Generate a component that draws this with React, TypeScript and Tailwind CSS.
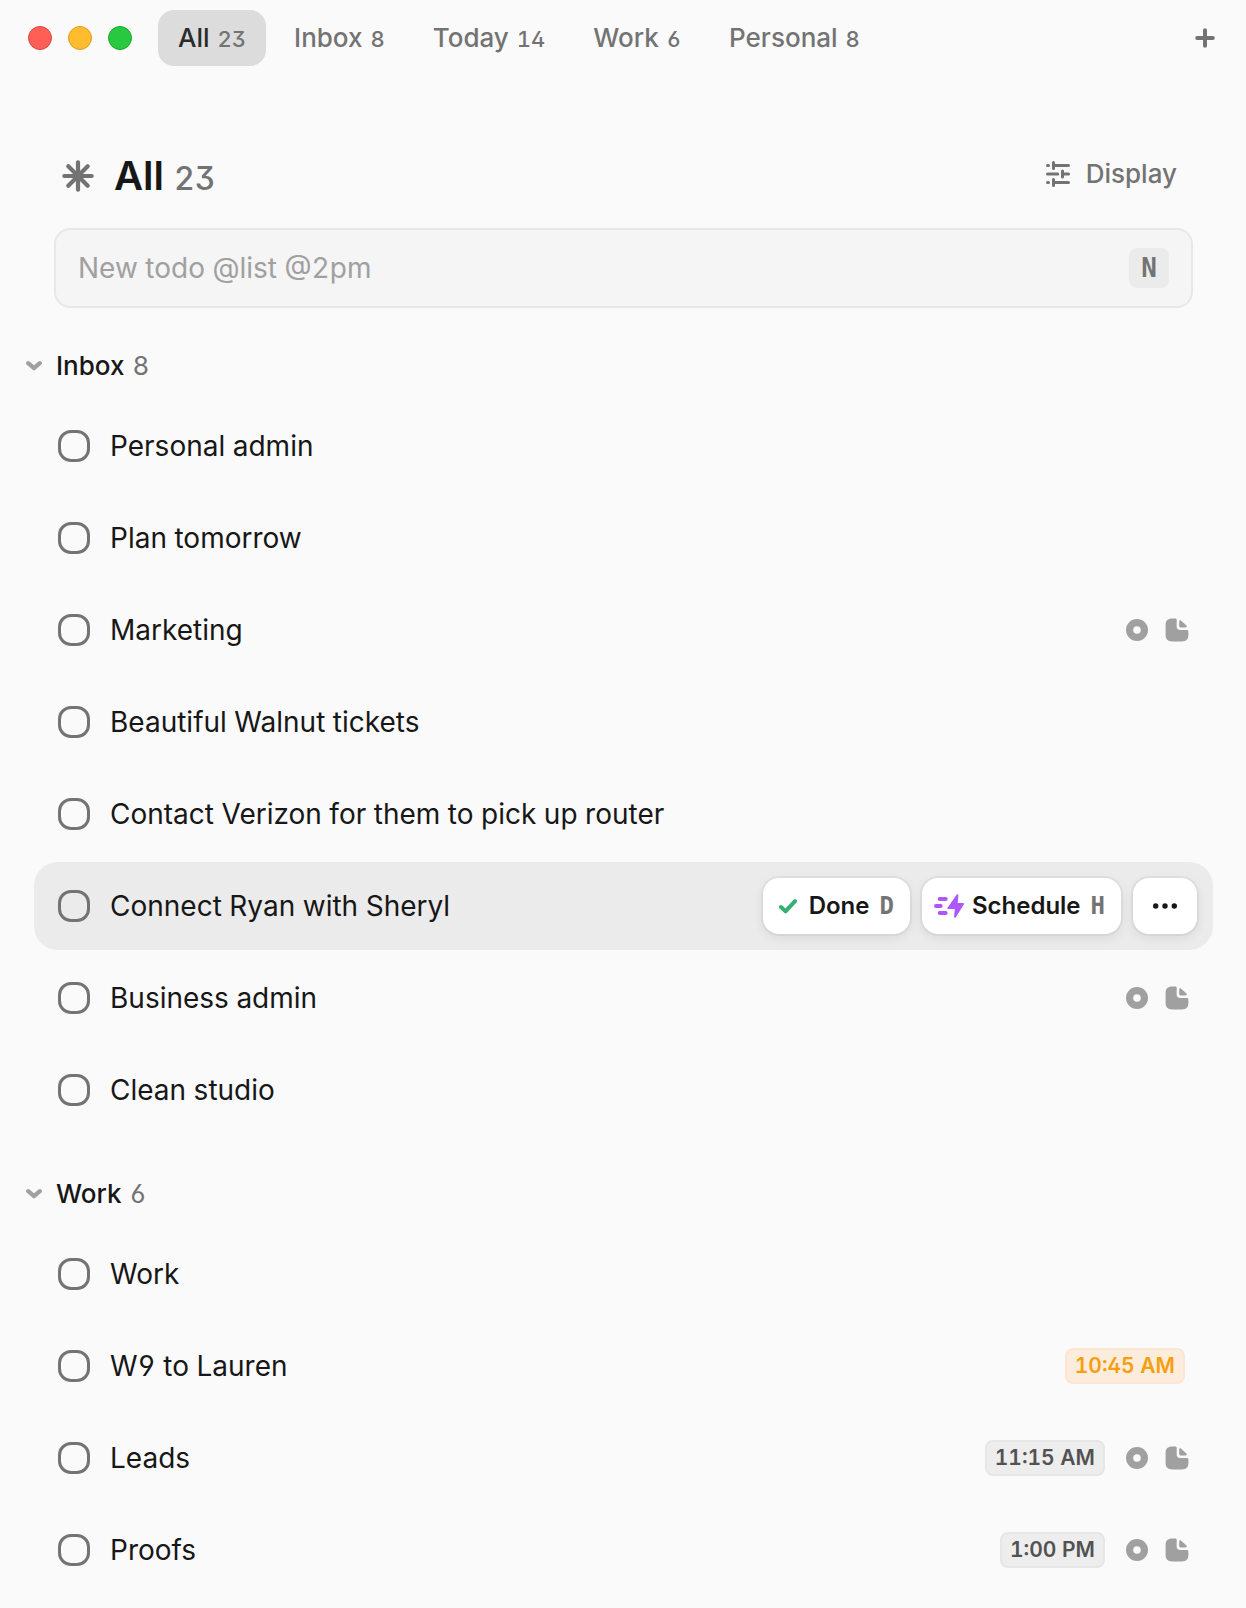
import React from 'react';

type TodoItem = {
  title: string;
  time?: string;
  due?: boolean;
  meta?: boolean;
  active?: boolean;
};

type Section = { name: string; count: number; items: TodoItem[] };

const TABS = [
  { name: 'All', count: 23, active: true },
  { name: 'Inbox', count: 8 },
  { name: 'Today', count: 14 },
  { name: 'Work', count: 6 },
  { name: 'Personal', count: 8 },
];

const SECTIONS: Section[] = [
  {
    name: 'Inbox',
    count: 8,
    items: [
      { title: 'Personal admin' },
      { title: 'Plan tomorrow' },
      { title: 'Marketing', meta: true },
      { title: 'Beautiful Walnut tickets' },
      { title: 'Contact Verizon for them to pick up router' },
      { title: 'Connect Ryan with Sheryl', active: true },
      { title: 'Business admin', meta: true },
      { title: 'Clean studio' },
    ],
  },
  {
    name: 'Work',
    count: 6,
    items: [
      { title: 'Work' },
      { title: 'W9 to Lauren', time: '10:45 AM', due: true },
      { title: 'Leads', time: '11:15 AM', meta: true },
      { title: 'Proofs', time: '1:00 PM', meta: true },
    ],
  },
];

const PlusIcon = () => (
  <svg className="w-5 h-5" viewBox="0 0 20 20" fill="none" stroke="currentColor" strokeWidth="4" strokeLinecap="round">
    <path d="M10 2.2v15.6M2.2 10h15.6" />
  </svg>
);

const AsteriskIcon = () => (
  <svg className="w-8 h-8 text-[#737373]" viewBox="0 0 32 32" fill="none" stroke="currentColor" strokeWidth="4.2" strokeLinecap="round">
    <path d="M16 2.3v27.4M2.3 16h27.4M6.3 6.3l19.4 19.4M25.7 6.3L6.3 25.7" />
  </svg>
);

const SlidersIcon = () => (
  <svg className="w-6 h-[26px]" viewBox="0 0 24 26" fill="none" stroke="currentColor" strokeWidth="3" strokeLinecap="round">
    <path d="M1.5 4.4h1M7.5 4.4h15M7.5 1.5v6M1.5 13h10.3M16.5 13h6M16.5 10v6M1.5 21.6h1M7.5 21.6h15M7.5 18.5v6" />
  </svg>
);

const ChevronIcon = () => (
  <svg className="w-4 h-4 text-[#a0a0a0]" viewBox="0 0 16 16" fill="none" stroke="currentColor" strokeWidth="4.2" strokeLinecap="round" strokeLinejoin="round">
    <path d="M2.2 5.2L8 10.2l5.800-5" />
  </svg>
);

const CheckIcon = () => (
  <svg className="w-[18px] h-4 text-[#33b073]" viewBox="0 0 18 16" fill="none" stroke="currentColor" strokeWidth="4" strokeLinecap="round" strokeLinejoin="round">
    <path d="M2 9l4.6 4.4L16 3.2" />
  </svg>
);

const BoltIcon = () => (
  <svg className="w-[30px] h-6 text-[#ad57ff]" viewBox="0 0 30 24" fill="currentColor">
    <path d="M22.6 .7c.7-.9 1.9-.5 1.8 .6l-.7 7.6h5.3c1 0 1.4 .9 .8 1.7L21.9 23.3c-.7 .9-1.9 .5-1.8-.6l.7-7.6h-6.3c-1 0-1.4-.9-.8-1.7z" />
    <path d="M5.7 5h6M2 12h4.7M5.7 19h6" stroke="currentColor" strokeWidth="4" strokeLinecap="round" fill="none" />
  </svg>
);

const DotsIcon = () => (
  <svg className="w-6 h-6" viewBox="0 0 24 24" fill="currentColor">
    <circle cx="2.7" cy="12" r="2.7" />
    <circle cx="12" cy="12" r="2.7" />
    <circle cx="21.3" cy="12" r="2.7" />
  </svg>
);

const RingIcon = () => (
  <svg className="w-6 h-6" viewBox="0 0 24 24" fill="none" stroke="currentColor" strokeWidth="7.2">
    <circle cx="12" cy="12" r="7.4" />
  </svg>
);

const NoteIcon = () => (
  <svg className="w-6 h-6" viewBox="0 0 24 24" fill="currentColor">
    <path d="M7 .6h3.2c1 0 1.5 .5 1.5 1.5v6.4c0 2.3 1.2 3.5 3.5 3.5h6.6c1.1 0 1.6 .6 1.6 1.6v3.6c0 4-2.3 6.2-6.2 6.2H7C3 23.4 .6 21.2 .6 17.2V6.8C.6 2.8 3 .6 7 .6z" />
    <path d="M14.2 3.2c0-.9 1-1.4 1.7-.8l5.5 5.1c.7 .7 .3 1.9-.7 1.9h-5.1c-.9 0-1.4-.5-1.4-1.4z" />
  </svg>
);

const ACTION =
  'h-14 rounded-2xl bg-white flex items-center font-semibold text-2xl text-[#171717] shadow-[0_0_0_2px_rgba(0,0,0,0.04),0_4px_12px_rgba(0,0,0,0.08)]';
const KEY = 'font-["DejaVu_Sans_Mono",monospace] font-bold text-[#737373]';

const RowActions = () => (
  <div className="flex gap-3">
    <button className={`${ACTION} px-4`}>
      <CheckIcon />
      <span className="ml-3 mr-2.5">Done</span>
      <kbd className={`${KEY} text-2xl`}>D</kbd>
    </button>
    <button className={`${ACTION} pl-3 pr-4`}>
      <BoltIcon />
      <span className="ml-2 mr-2.5">Schedule</span>
      <kbd className={`${KEY} text-2xl`}>H</kbd>
    </button>
    <button className={`${ACTION} px-5`} aria-label="More">
      <DotsIcon />
    </button>
  </div>
);

const TimeBadge: React.FC<{ time: string; due?: boolean }> = ({ time, due }) => (
  <span
    className={`h-9 px-2 mr-1 rounded-lg border-2 flex items-center text-[21px] font-semibold ${
      due ? 'bg-[#fbecdc] border-[#fbe6d3] text-[#f79e0f]' : 'bg-[#ededed] border-[#e6e6e6] text-[#525252]'
    }`}
  >
    {time}
  </span>
);

const TodoRow: React.FC<{ item: TodoItem }> = ({ item }) => (
  <li className={`h-[88px] pl-6 flex items-center justify-between rounded-3xl ${item.active ? 'bg-[#ebebeb] pr-4' : 'pr-6'}`}>
    <label className="flex items-center gap-5 text-[28px] leading-9 text-[#171717]">
      <input type="checkbox" className="appearance-none w-8 h-8 rounded-[13px] border-3 border-[#737373] shrink-0" />
      {item.title}
    </label>
    {item.active ? (
      <RowActions />
    ) : (
      <div className="flex items-center gap-4 text-[#a0a0a0]">
        {item.time && <TimeBadge time={item.time} due={item.due} />}
        {item.meta && <RingIcon />}
        {item.meta && <NoteIcon />}
      </div>
    )}
  </li>
);

export default function App() {
  return (
    <div className='min-h-screen bg-[#fafafa] font-["Inter",sans-serif] tabular-nums [font-feature-settings:"ss01","cv09"]'>
      <header className="h-[76px] pl-7 pr-[31px] flex items-center justify-between text-[#737373]">
        <div className="flex items-center">
          <div className="flex gap-4 mr-[26px]">
            <button aria-label="Close" className="w-6 h-6 rounded-full bg-[#ff5f57] border border-[#e0473f]" />
            <button aria-label="Minimize" className="w-6 h-6 rounded-full bg-[#febc2e] border border-[#dd9f26]" />
            <button aria-label="Zoom" className="w-6 h-6 rounded-full bg-[#28c840] border border-[#1daa2c]" />
          </div>
          <nav className="flex gap-2">
            {TABS.map((tab) => (
              <button
                key={tab.name}
                className={`h-14 px-5 rounded-2xl flex items-center text-[26px] font-medium ${tab.active ? 'bg-[#dcdcdc]' : ''}`}
              >
                <span className="pb-0.5 flex items-baseline gap-2">
                  <span className={tab.active ? 'text-[#2b2b2b]' : ''}>{tab.name}</span>
                  <span className="text-[22px]">{tab.count}</span>
                </span>
              </button>
            ))}
          </nav>
        </div>
        <button aria-label="New list">
          <PlusIcon />
        </button>
      </header>

      <main className="pl-[34px] pr-[33px] pt-[66px]">
        <div className="pl-7 pr-9 h-[68px] flex items-center justify-between">
          <div className="flex items-center gap-5">
            <AsteriskIcon />
            <h1 className="pt-0.5 flex items-baseline gap-2.5 text-[40px] leading-[48px] font-semibold text-[#171717]">
              All
              <span className="text-[32px] font-medium text-[#737373]">23</span>
            </h1>
          </div>
          <button className="pb-1 flex items-center gap-4 text-[26px] leading-8 font-medium text-[#737373]">
            <SlidersIcon />
            Display
          </button>
        </div>

        <div className="mt-[18px] mx-5 h-20 px-[22px] flex items-center rounded-2xl border-2 border-[#e8e8e8] bg-[#f5f5f5]">
          <input
            type="text"
            aria-label="New todo"
            placeholder="New todo @list @2pm"
            className="flex-1 min-w-0 bg-transparent outline-none text-[28px] text-[#171717] placeholder:text-[#a0a0a0]"
          />
          <kbd className={`${KEY} w-10 h-10 rounded-lg bg-[#ebebeb] flex items-center justify-center text-[26px]`}>N</kbd>
        </div>

        <div className="mt-[22px] flex flex-col gap-6">
          {SECTIONS.map((section) => (
            <section key={section.name}>
              <h2>
                <button className="-ml-2 h-[72px] flex items-center gap-3.5 text-[26px] font-medium text-[#171717]">
                  <ChevronIcon />
                  <span className="pb-0.5 flex gap-2">
                    {section.name}
                    <span className="font-normal text-[#737373]">{section.count}</span>
                  </span>
                </button>
              </h2>
              <ul className="flex flex-col gap-1">
                {section.items.map((item) => (
                  <TodoRow key={item.title} item={item} />
                ))}
              </ul>
            </section>
          ))}
        </div>
      </main>
    </div>
  );
}
